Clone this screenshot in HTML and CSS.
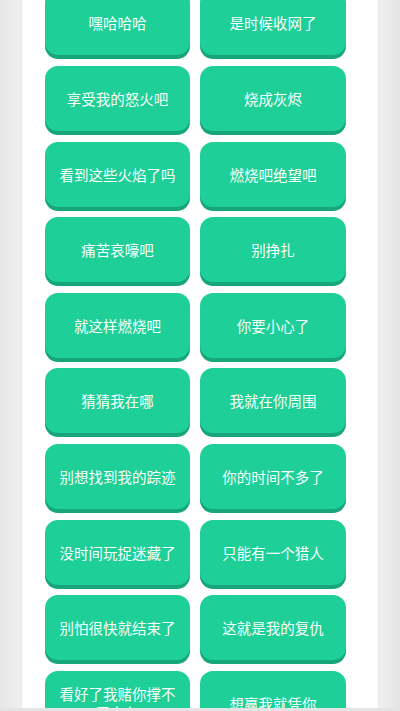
FILE: index.html
```html
<!DOCTYPE html>
<html lang="zh-CN">
<head>
    <meta charset="UTF-8">
    <meta name="viewport" content="width=device-width, initial-scale=1.0">
    <title>台词按钮</title>
    <link rel="stylesheet" href="styles.css">
</head>
<body>
    <div class="panel">
        <div class="grid">
            <button class="line-btn">嘿哈哈哈</button>
            <button class="line-btn">是时候收网了</button>
            <button class="line-btn">享受我的怒火吧</button>
            <button class="line-btn">烧成灰烬</button>
            <button class="line-btn">看到这些火焰了吗</button>
            <button class="line-btn">燃烧吧绝望吧</button>
            <button class="line-btn">痛苦哀嚎吧</button>
            <button class="line-btn">别挣扎</button>
            <button class="line-btn">就这样燃烧吧</button>
            <button class="line-btn">你要小心了</button>
            <button class="line-btn">猜猜我在哪</button>
            <button class="line-btn">我就在你周围</button>
            <button class="line-btn">别想找到我的踪迹</button>
            <button class="line-btn">你的时间不多了</button>
            <button class="line-btn">没时间玩捉迷藏了</button>
            <button class="line-btn">只能有一个猎人</button>
            <button class="line-btn">别怕很快就结束了</button>
            <button class="line-btn">这就是我的复仇</button>
            <button class="line-btn">看好了我赌你撑不了多久</button>
            <button class="line-btn">想赢我就凭你</button>
        </div>
    </div>
    <div class="bottom-edge"></div>
</body>
</html>
```

FILE: styles.css
```css
:root {
    --green: #1ecf98;
    --green-dark: #17a67a;
}

* {
    margin: 0;
    padding: 0;
    box-sizing: border-box;
}

body {
    font-family: "Noto Sans CJK SC", "Noto Sans", sans-serif;
    background: linear-gradient(90deg, #e6e6e6 0%, #efefef 5%, #efefef 95%, #e4e4e4 100%);
    height: 711px;
    overflow: hidden;
}

.panel {
    background: #fff;
    width: 356px;
    margin-left: 22px;
    min-height: 711px;
    padding-left: 23px;
    box-shadow: 0 0 3px rgba(0, 0, 0, 0.05);
}

.grid {
    display: grid;
    grid-template-columns: 145px 146px;
    column-gap: 10px;
    row-gap: 10.6px;
    margin-top: -9.6px;
}

.line-btn {
    height: 65px;
    border: none;
    border-radius: 13px;
    background: var(--green);
    box-shadow: 0 4px 0 var(--green-dark);
    color: #f7fffb;
    font-family: inherit;
    font-size: 14.5px;
    line-height: 19px;
    padding: 0 10px;
    text-align: center;
}

.bottom-edge {
    position: fixed;
    left: 0;
    right: 0;
    bottom: 0;
    height: 3px;
    background: #e4e4e4;
}
```
